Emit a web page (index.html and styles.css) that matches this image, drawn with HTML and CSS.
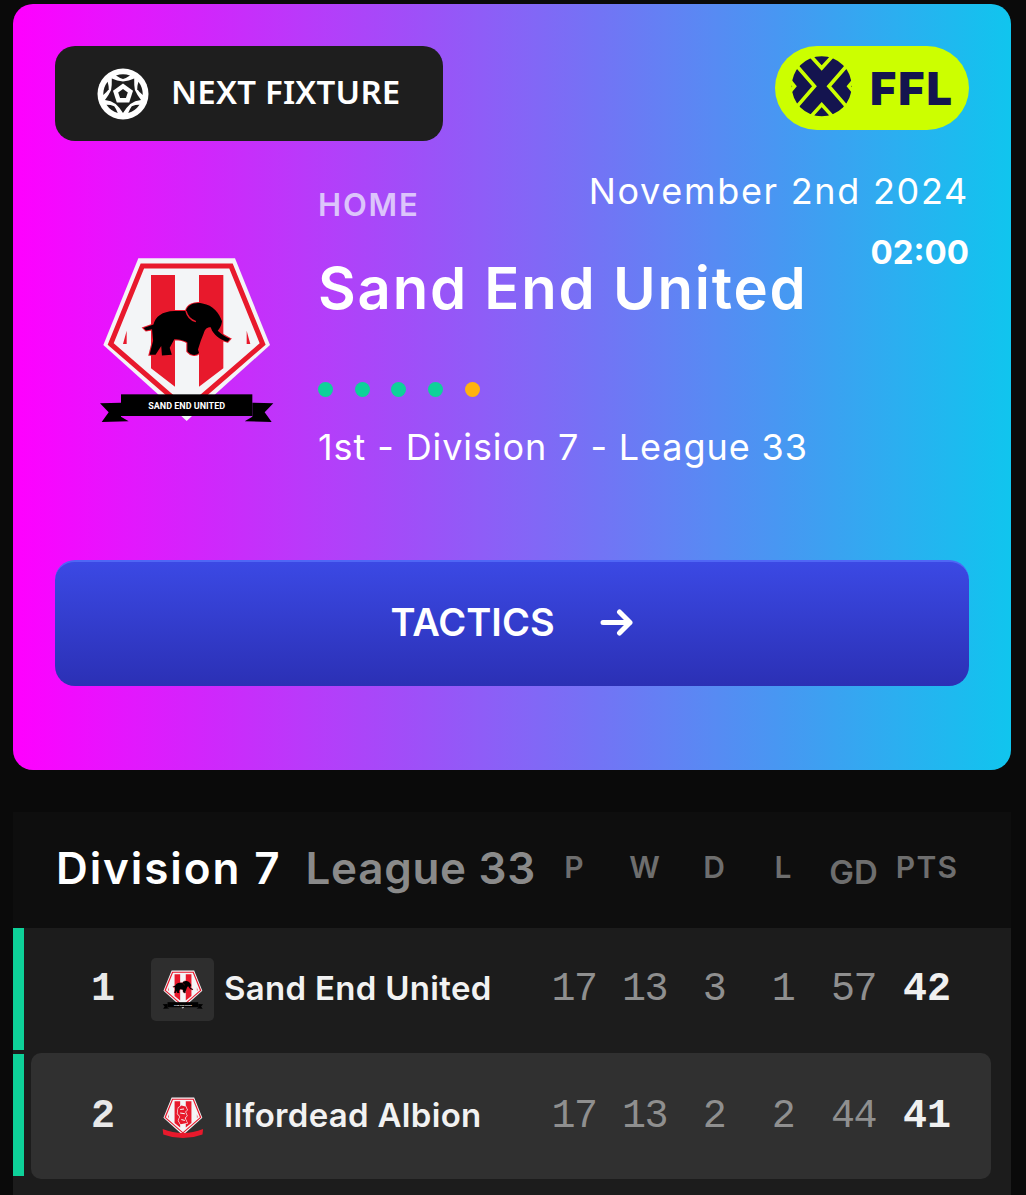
FILE: index.html
```html
<!DOCTYPE html>
<html>
<head>
  <title>Next Fixture</title>
  <link rel="stylesheet" href="styles.css">
</head>
<body>
<svg class="defs" width="0" height="0">
  <defs>
    <symbol id="crest-base" viewBox="0 0 630 600">
      <polygon points="175,55 465,55 570,315 320,540 70,315" fill="#f3f5f7"/>
      <polygon points="187,78 453,78 548,312 320,510 92,312" fill="none" stroke="#e8192c" stroke-width="15"/>
      <path d="M213 105H285V440L213 385ZM357 105H430V385L357 440Z" fill="#e8192c"/>
      <path d="M140 272V312H129ZM500 272V312H511Z" fill="#e8192c"/>
    </symbol>
    <symbol id="crest-sand" viewBox="0 0 630 600">
      <use href="#crest-base"/>
      <g transform="translate(320 268) scale(1.06) translate(-320 -268)">
        <path d="M198 264L226 254C232 232 250 217 285 216L318 216C322 200 340 190 365 195C395 200 412 222 420 245C418 260 412 266 408 272C420 284 432 290 443 295L436 303C420 300 402 288 392 272L388 262C378 262 372 266 368 280L360 300L352 325L355 335C345 345 330 340 322 330L322 305C315 300 300 296 285 296L272 320L278 340L250 342L248 315L232 340L215 340L225 300L222 268L205 271Z" fill="#000" stroke="#e8192c" stroke-width="6" paint-order="stroke"/>
        <path d="M318 216C322 232 332 242 346 246" fill="none" stroke="#e8192c" stroke-width="4"/>
      </g>
      <path d="M60 490L123 488V530L146 544L65 546L86 517ZM580 490L517 488V530L494 544L575 546L554 517Z" fill="#000"/>
      <polygon points="304,528 336,528 320,543" fill="#f3f5f7"/>
      <rect x="123" y="463" width="394" height="65" fill="#000"/>
      <text x="320" y="506" class="crest-text">SAND END UNITED</text>
    </symbol>
    <symbol id="crest-ilford" viewBox="0 0 630 600">
      <use href="#crest-base"/>
      <path d="M262 190L300 160L355 170L375 215L350 240L372 290L345 320L375 385L290 400L262 350L285 300L250 262Z" fill="#e8192c" stroke="#f3f5f7" stroke-width="16" paint-order="stroke"/>
      <path d="M285 210L335 205M285 255L345 265M300 340L345 350" stroke="#f3f5f7" stroke-width="13" fill="none"/>
      <path d="M60 462Q320 565 580 462L572 530Q320 625 68 530Z" fill="#e8192c"/>
    </symbol>
  </defs>
</svg>

<div class="fixture-card">
  <div class="fixture-top">
    <div class="next-badge">
      <svg class="ball-icon" viewBox="0 0 60 60">
        <circle cx="30" cy="30" r="25.5" fill="#fff"/>
        <path d="M30 17.5Q36 17 41.2 14.6Q41 21 41.9 26.1Q44 31 48 35.9Q42 36.5 37.3 40.1Q33 44 30 49Q27 44 22.7 40.1Q18 36.5 12 35.9Q16 31 18.1 26.1Q19 21 18.8 14.6Q24 17 30 17.5Z" fill="#1e1e1e"/>
        <polygon points="30,19.5 40,26.8 36.2,38.5 23.8,38.5 20,26.8" fill="#fff"/>
        <polygon points="30,25 34.8,28.4 32.9,34 27.1,34 25.2,28.4" fill="#1e1e1e"/>
        <g fill="#1e1e1e">
          <path id="ball-leaf" d="M23 11.5Q30 9 37 11.5Q33.5 14 30 15Q26.5 14 23 11.5Z"/>
          <use href="#ball-leaf" transform="rotate(72 30 30)"/>
          <use href="#ball-leaf" transform="rotate(144 30 30)"/>
          <use href="#ball-leaf" transform="rotate(216 30 30)"/>
          <use href="#ball-leaf" transform="rotate(288 30 30)"/>
        </g>
      </svg>
      <span class="next-label">NEXT FIXTURE</span>
    </div>
    <div class="ffl-pill">
      <svg class="ffl-icon" viewBox="0 0 75 70">
        <circle cx="36.7" cy="33.3" r="30" fill="#14144f"/>
        <g fill="none" stroke="#ccff00" stroke-width="3.6">
          <path d="M24 1L36.7 15L49.4 1"/>
          <path d="M24 65.6L36.7 51.6L49.4 65.6"/>
          <path d="M11 12L29.5 33.3L11 54.6"/>
          <path d="M62.4 12L43.9 33.3L62.4 54.6"/>
          <path d="M1 23L9.5 33.3L1 43.6"/>
          <path d="M72.4 23L63.9 33.3L72.4 43.6"/>
        </g>
      </svg>
      <span class="ffl-text">FFL</span>
    </div>
  </div>

  <div class="fixture-main">
    <div class="crest-col">
      <svg class="crest-large"><use href="#crest-sand"/></svg>
    </div>
    <div class="fixture-info">
      <div class="venue">HOME</div>
      <div class="match-date">November 2nd 2024</div>
      <div class="team-name">Sand End United</div>
      <div class="match-time">02:00</div>
      <div class="form-dots">
        <span class="dot"></span>
        <span class="dot"></span>
        <span class="dot"></span>
        <span class="dot"></span>
        <span class="dot dot-draw"></span>
      </div>
      <div class="standing">1st - Division 7 - League 33</div>
    </div>
  </div>

  <div class="tactics-btn">
    <span>TACTICS</span>
    <svg class="arrow-icon" viewBox="0 0 34 28">
      <path d="M3 14.5H30M19.5 4L30 14.5L19.5 25" fill="none" stroke="#fff" stroke-width="5" stroke-linecap="round" stroke-linejoin="round"/>
    </svg>
  </div>
</div>

<div class="league-table">
  <div class="table-head">
    <div class="table-title">
      <span class="title-division">Division 7</span>
      <span class="title-league">League 33</span>
    </div>
    <div class="stat-cols head-cols">
      <span>P</span>
      <span>W</span>
      <span>D</span>
      <span>L</span>
      <span class="head-gd">GD</span>
      <span class="head-pts">PTS</span>
    </div>
  </div>

  <div class="table-row">
    <div class="row-bar"></div>
    <div class="row-body">
      <div class="rank">1</div>
      <div class="row-crest boxed"><svg class="crest-small"><use href="#crest-sand"/></svg></div>
      <div class="row-team">Sand End United</div>
      <div class="stat-cols">
        <span>17</span><span>13</span><span>3</span><span>1</span><span>57</span><span class="pts">42</span>
      </div>
    </div>
  </div>

  <div class="table-row">
    <div class="row-bar"></div>
    <div class="row-body row-own">
      <div class="rank">2</div>
      <div class="row-crest"><svg class="crest-small"><use href="#crest-ilford"/></svg></div>
      <div class="row-team">Ilfordead Albion</div>
      <div class="stat-cols">
        <span>17</span><span>13</span><span>2</span><span>2</span><span>44</span><span class="pts">41</span>
      </div>
    </div>
  </div>
</div>
</body>
</html>
```

FILE: styles.css
```css
html, body {
  margin: 0;
  padding: 0;
}
body {
  background: #0a0a0a;
  font-family: Inter, "Liberation Sans", sans-serif;
  color: #fff;
  height: 1195px;
  overflow: hidden;
  padding: 4px 15px 0 13px;
  box-sizing: border-box;
}
.defs {
  position: absolute;
}
.crest-text {
  font-family: Roboto, "Liberation Sans", sans-serif;
  font-weight: 700;
  font-size: 27px;
  fill: #fff;
  text-anchor: middle;
}

/* fixture card */
.fixture-card {
  background: linear-gradient(90deg, #ff00ff 0%, #10c5ee 100%);
  border-radius: 20px;
  padding: 42px 42px 84px;
}
.fixture-top {
  display: flex;
  justify-content: space-between;
  align-items: flex-start;
}
.next-badge {
  width: 388px;
  height: 95px;
  background: #1e1e1e;
  border-radius: 20px;
  display: flex;
  align-items: center;
  padding-left: 38px;
  box-sizing: border-box;
}
.ball-icon {
  width: 60px;
  height: 60px;
  margin-right: 18px;
}
.next-label {
  font-family: "Noto Sans", sans-serif;
  font-weight: 600;
  font-size: 33px;
  letter-spacing: 0.2px;
  margin-bottom: 4px;
}
.ffl-pill {
  width: 194px;
  height: 84px;
  background: #ccff00;
  border-radius: 42px;
  display: flex;
  align-items: center;
  padding-left: 10px;
  box-sizing: border-box;
}
.ffl-icon {
  width: 75px;
  height: 70px;
  margin-right: 10px;
}
.ffl-text {
  font-weight: 900;
  font-size: 45px;
  color: #14144f;
  letter-spacing: 2px;
}

.fixture-main {
  display: flex;
  margin-top: 25px;
}
.crest-col {
  width: 263px;
  flex: none;
  padding: 74px 0 0 24.5px;
  box-sizing: border-box;
}
.crest-large {
  display: block;
  width: 210px;
  height: 200px;
}
.fixture-info {
  flex: 1;
  display: grid;
  grid-template-columns: auto auto;
  justify-content: space-between;
  grid-template-rows: 58px auto auto auto;
}
.venue {
  align-self: end;
  font-weight: 600;
  font-size: 31px;
  line-height: 38px;
  letter-spacing: 1.8px;
  color: #dcc4fb;
}
.match-date {
  font-size: 36px;
  line-height: 50px;
  letter-spacing: 1.7px;
  text-align: right;
}
.team-name {
  grid-column: 1 / -1;
  grid-row: 2;
  font-weight: 600;
  font-size: 58px;
  line-height: 68px;
  letter-spacing: 1.8px;
  margin-top: 30px;
}
.match-time {
  grid-column: 1 / -1;
  grid-row: 2;
  justify-self: end;
  font-weight: 700;
  font-size: 33px;
  line-height: 40px;
  margin-top: 8px;
}
.form-dots {
  grid-column: 1 / -1;
  display: flex;
  gap: 21.7px;
  margin-top: 60px;
}
.dot {
  width: 15px;
  height: 15px;
  border-radius: 50%;
  background: #0ed199;
}
.dot-draw {
  background: #ffb30f;
}
.standing {
  grid-column: 1 / -1;
  font-size: 36px;
  line-height: 44px;
  letter-spacing: 0.9px;
  margin-top: 28px;
}

.tactics-btn {
  margin-top: 91px;
  height: 126px;
  border-radius: 20px;
  background: linear-gradient(180deg, #3b49e4 0%, #2b30b5 100%);
  border-top: 2px solid #4f66f5;
  box-sizing: border-box;
  display: flex;
  justify-content: center;
  align-items: center;
  gap: 45px;
  padding-bottom: 4px;
  font-weight: 600;
  font-size: 38px;
}
.arrow-icon {
  width: 34px;
  height: 28px;
}

/* table */
.league-table {
  margin-top: 42px;
  background: #1c1c1c;
  height: 400px;
}
.table-head {
  background: #0e0e0e;
  height: 116px;
  display: flex;
  align-items: center;
  padding-left: 43px;
}
.table-title {
  width: 483px;
  flex: none;
  display: flex;
  gap: 24px;
  font-weight: 600;
  font-size: 44px;
  margin-bottom: 5px;
}
.title-division {
  letter-spacing: 1.9px;
}
.title-league {
  color: #8a8a8a;
  letter-spacing: 0.7px;
}
.stat-cols {
  display: grid;
  grid-template-columns: 70px 71px 68px 70px 71px 76px;
  text-align: center;
  font-family: "Liberation Mono", monospace;
  font-size: 40px;
  letter-spacing: -1.5px;
  color: #8f8f8f;
}
.head-cols {
  font-family: Inter, sans-serif;
  font-weight: 600;
  font-size: 30px;
  letter-spacing: 0;
  color: #6e6e6e;
}
.head-gd {
  font-size: 33px;
  margin-top: 3px;
}
.head-pts {
  letter-spacing: 1.2px;
}
.pts {
  font-weight: 700;
  letter-spacing: 0;
  color: #f0f0f0;
}
.table-row {
  display: flex;
  height: 122px;
  margin-bottom: 4px;
}
.row-bar {
  width: 11px;
  flex: none;
  background: #0ed199;
}
.row-body {
  flex: 1;
  display: grid;
  grid-template-columns: 86px 68px 325px auto;
  align-items: center;
  padding-left: 36px;
}
.row-own {
  background: #303030;
  border-radius: 10px;
  margin: -1px 20px -3px 7px;
  padding-left: 29px;
}
.rank {
  font-family: "Liberation Mono", monospace;
  font-weight: 700;
  font-size: 40px;
  color: #e8e8e8;
  text-align: center;
}
.row-crest {
  width: 63px;
  height: 63px;
  margin-left: 5px;
  border-radius: 5px;
  display: flex;
  justify-content: center;
  align-items: center;
}
.row-crest.boxed {
  background: #2e2e2e;
}
.crest-small {
  width: 49px;
  height: 47px;
}
.row-team {
  margin-left: 10px;
  font-weight: 600;
  font-size: 33px;
  letter-spacing: 0.3px;
  color: #f2f2f2;
  margin-bottom: 2px;
}
```
